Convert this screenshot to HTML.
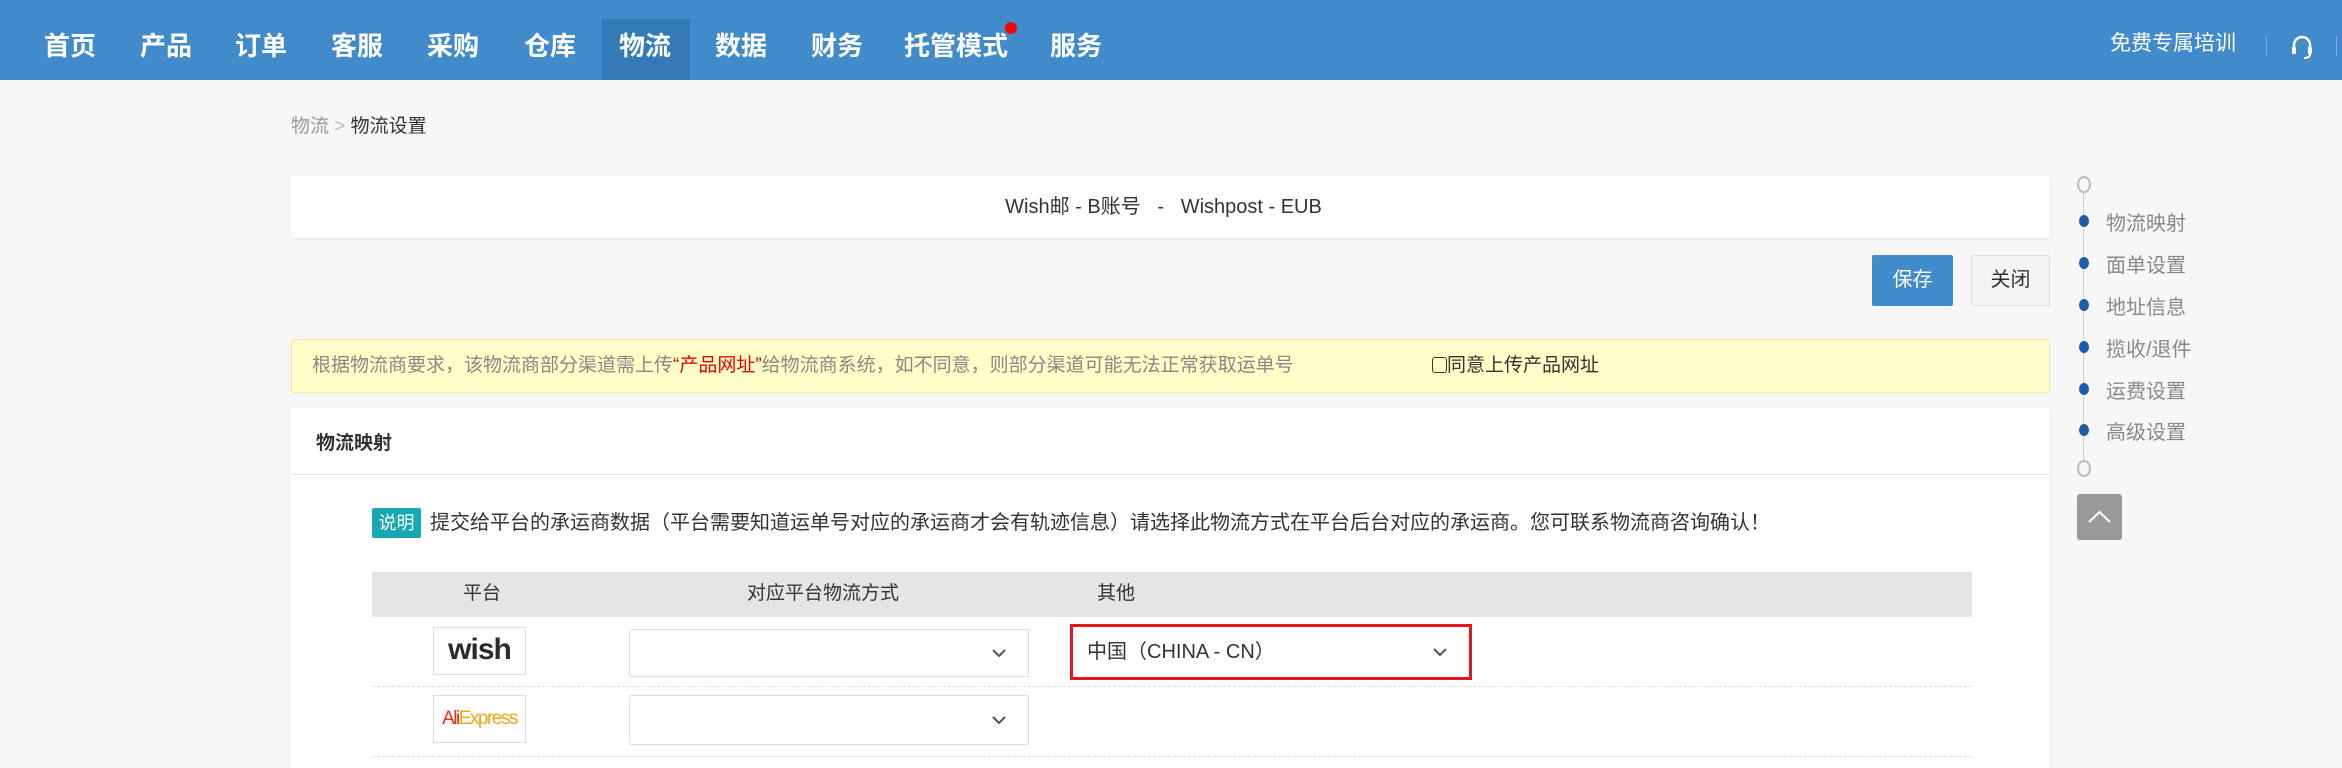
<!DOCTYPE html>
<html><head><meta charset="utf-8"><style>
*{margin:0;padding:0;box-sizing:border-box}
body{width:2342px;height:760px;background:#f7f7f7;font-family:"Liberation Sans","Noto Sans CJK SC",sans-serif;position:relative;overflow:hidden;color:#333}
.a{position:absolute}
.nav{left:0;top:0;width:2342px;height:80px;background:#418bca}
.ni{top:0;height:80px;line-height:92px;color:#fff;font-size:26px;font-weight:bold;text-align:center}
.card{background:#fff;box-shadow:0 1px 3px rgba(0,0,0,.08)}
.sel{background:#fff;border:1px solid #ddd;border-radius:2px}
.chev{position:absolute;right:20px;top:50%;margin-top:-9px}
.rn{left:2106px;font-size:20px;color:#888}
.dot{left:2079px;width:10px;height:12px;border-radius:50%;background:#1b5ea8}
</style></head><body>
<div class="a nav"></div>
<div class="a" style="left:602px;top:19px;width:88px;height:61px;background:#337ab7"></div>
<div class="a ni" style="left:40px;width:60px">首页</div>
<div class="a ni" style="left:136px;width:60px">产品</div>
<div class="a ni" style="left:231px;width:60px">订单</div>
<div class="a ni" style="left:327px;width:60px">客服</div>
<div class="a ni" style="left:423px;width:60px">采购</div>
<div class="a ni" style="left:520px;width:60px">仓库</div>
<div class="a ni" style="left:615px;width:60px">物流</div>
<div class="a ni" style="left:711px;width:60px">数据</div>
<div class="a ni" style="left:807px;width:60px">财务</div>
<div class="a ni" style="left:901px;width:110px">托管模式</div>
<div class="a" style="left:1005px;top:22px;width:12px;height:12px;border-radius:50%;background:#f00"></div>
<div class="a ni" style="left:1046px;width:60px">服务</div>
<div class="a" style="left:2110px;top:31px;color:#fff;font-size:21px;line-height:26px">免费专属培训</div>
<div class="a" style="left:2266px;top:36px;width:1px;height:20px;background:#7fb0dc"></div>
<svg class="a" style="left:2290px;top:34px" width="24" height="26" viewBox="0 0 24 26"><path d="M4 15V11a8 8 0 0 1 16 0v4" fill="none" stroke="#fff" stroke-width="2.5"/><rect x="2" y="13" width="4" height="7" rx="1" fill="#fff"/><rect x="18" y="13" width="4" height="7" rx="1" fill="#fff"/><path d="M20 20q0 4-6 4" fill="none" stroke="#fff" stroke-width="2"/></svg>
<div class="a" style="left:2336px;top:36px;width:1px;height:20px;background:#7fb0dc"></div>

<div class="a" style="left:291px;top:114px;font-size:19px;line-height:26px;color:#999">物流 <span style="color:#bbb">&gt;</span> <span style="color:#333">物流设置</span></div>

<div class="a card" style="left:291px;top:176px;width:1759px;height:62px;text-align:center;line-height:62px;font-size:20px;color:#333;padding-right:14px">Wish邮 - B账号 &nbsp; - &nbsp; Wishpost - EUB</div>

<div class="a" style="left:1872px;top:255px;width:81px;height:51px;background:#428bca;border-radius:2px;color:#fff;font-size:20px;text-align:center;line-height:51px">保存</div>
<div class="a" style="left:1971px;top:255px;width:79px;height:51px;background:#f4f4f4;border:1px solid #ddd;border-radius:2px;font-size:20px;text-align:center;line-height:49px">关闭</div>

<div class="a" style="left:291px;top:339px;width:1759px;height:54px;background:#ffffc8;border:1px solid #e8e8b0;border-radius:3px;font-size:19px;line-height:52px;color:#888;padding-left:20px">根据物流商要求，该物流商部分渠道需上传<span style="color:#e00;font-weight:normal">“产品网址”</span>给物流商系统，如不同意，则部分渠道可能无法正常获取运单号
<span style="position:absolute;left:1140px;top:0;color:#333"><span style="display:inline-block;width:15px;height:16px;border:1.5px solid #333;border-radius:3px;vertical-align:-2px"></span>同意上传产品网址</span></div>

<div class="a card" style="left:291px;top:408px;width:1759px;height:360px"></div>
<div class="a" style="left:316px;top:430px;font-size:19px;font-weight:bold;line-height:28px">物流映射</div>
<div class="a" style="left:291px;top:474px;width:1759px;height:1px;background:#e5e5e5"></div>

<div class="a" style="left:372px;top:508px;width:49px;height:30px;background:#16a9b1;color:#fff;font-size:18px;text-align:center;line-height:30px;border-radius:2px">说明</div>
<div class="a" style="left:430px;top:509px;font-size:20px;line-height:28px;color:#333">提交给平台的承运商数据（平台需要知道运单号对应的承运商才会有轨迹信息）请选择此物流方式在平台后台对应的承运商。您可联系物流商咨询确认！</div>

<div class="a" style="left:372px;top:572px;width:1600px;height:45px;background:#e5e5e5"></div>
<div class="a" style="left:463px;top:580px;font-size:19px;line-height:28px">平台</div>
<div class="a" style="left:747px;top:580px;font-size:19px;line-height:28px">对应平台物流方式</div>
<div class="a" style="left:1097px;top:580px;font-size:19px;line-height:28px">其他</div>

<div class="a" style="left:372px;top:686px;width:1600px;border-top:1.5px dashed #ddd"></div>
<div class="a" style="left:372px;top:756px;width:1600px;border-top:1.5px dashed #ddd"></div>

<div class="a" style="left:433px;top:627px;width:93px;height:48px;border:1px solid #ddd;background:#fff;text-align:center;line-height:44px;font-size:30px;font-weight:bold;color:#2b2b2b;letter-spacing:-1px">wish</div>
<div class="a" style="left:433px;top:695px;width:93px;height:48px;border:1px solid #ddd;background:#fff;text-align:center;line-height:46px;font-size:19px;letter-spacing:-1.5px"><span style="color:#e62e04">Ali</span><span style="color:#f7a21b">Express</span></div>

<div class="a sel" style="left:629px;top:629px;width:400px;height:48px"><svg class="chev" width="18" height="18" viewBox="0 0 18 18"><path d="M3 6l6 6 6-6" fill="none" stroke="#555" stroke-width="2"/></svg></div>
<div class="a sel" style="left:629px;top:695px;width:400px;height:50px"><svg class="chev" width="18" height="18" viewBox="0 0 18 18"><path d="M3 6l6 6 6-6" fill="none" stroke="#555" stroke-width="2"/></svg></div>
<div class="a" style="left:1070px;top:624px;width:402px;height:56px;border:3px solid #e5161e;background:#fff;font-size:20px;line-height:50px;padding-left:14px">中国（CHINA - CN）<svg class="chev" width="18" height="18" viewBox="0 0 18 18"><path d="M3 6l6 6 6-6" fill="none" stroke="#555" stroke-width="2"/></svg></div>

<div class="a" style="left:2083px;top:190px;width:1px;height:275px;background:#ccc"></div>
<div class="a" style="left:2077px;top:176px;width:14px;height:17px;border:2.5px solid #bbb;border-radius:50%;background:#f7f7f7"></div>
<div class="a" style="left:2077px;top:460px;width:14px;height:17px;border:2.5px solid #bbb;border-radius:50%;background:#f7f7f7"></div>
<div class="a dot" style="top:215px"></div><div class="a rn" style="top:207px">物流映射</div>
<div class="a dot" style="top:257px"></div><div class="a rn" style="top:249px">面单设置</div>
<div class="a dot" style="top:299px"></div><div class="a rn" style="top:291px">地址信息</div>
<div class="a dot" style="top:341px"></div><div class="a rn" style="top:333px">揽收/退件</div>
<div class="a dot" style="top:383px"></div><div class="a rn" style="top:375px">运费设置</div>
<div class="a dot" style="top:424px"></div><div class="a rn" style="top:416px">高级设置</div>
<div class="a" style="left:2077px;top:494px;width:45px;height:46px;background:#999;border-radius:3px"><svg width="45" height="46" viewBox="0 0 45 46"><path d="M12 28l10.5-10 10.5 10" fill="none" stroke="#fff" stroke-width="2"/></svg></div>
</body></html>
